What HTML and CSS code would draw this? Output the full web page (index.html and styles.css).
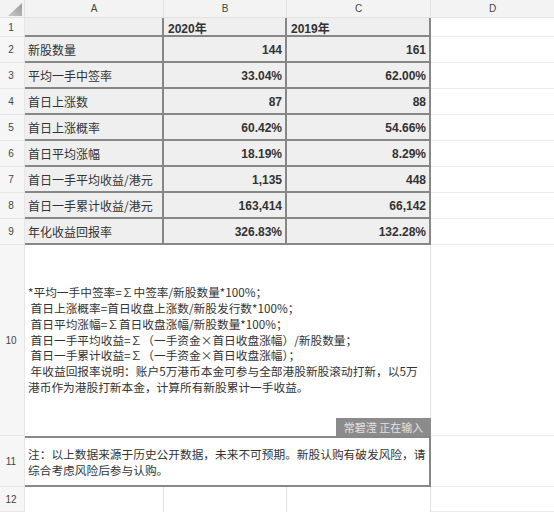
FILE: index.html
```html
<!DOCTYPE html>
<html lang="zh">
<head>
<meta charset="utf-8">
<link rel="stylesheet" href="styles.css">
</head>
<body>
<div class="sheet">
  <div class="hd corner"><svg width="25" height="18" viewBox="0 0 25 18"><defs><linearGradient id="g" x1="0" y1="1" x2="1" y2="0"><stop offset="0" stop-color="#c9c9c9"/><stop offset="1" stop-color="#9a9a9a"/></linearGradient></defs><polygon points="22,3 22,16 8,16" fill="url(#g)"/></svg></div>
  <div class="hd">A</div>
  <div class="hd">B</div>
  <div class="hd">C</div>
  <div class="hd last">D</div>

  <div class="rn">1</div>
  <div class="t lbl"></div>
  <div class="t lbl yr">2020年</div>
  <div class="t lbl yr">2019年</div>
  <div class="d"></div>

  <div class="rn">2</div>
  <div class="t lbl">新股数量</div>
  <div class="t val">144</div>
  <div class="t val">161</div>
  <div class="d"></div>

  <div class="rn">3</div>
  <div class="t lbl">平均一手中签率</div>
  <div class="t val">33.04%</div>
  <div class="t val">62.00%</div>
  <div class="d"></div>

  <div class="rn">4</div>
  <div class="t lbl">首日上涨数</div>
  <div class="t val">87</div>
  <div class="t val">88</div>
  <div class="d"></div>

  <div class="rn">5</div>
  <div class="t lbl">首日上涨概率</div>
  <div class="t val">60.42%</div>
  <div class="t val">54.66%</div>
  <div class="d"></div>

  <div class="rn">6</div>
  <div class="t lbl">首日平均涨幅</div>
  <div class="t val">18.19%</div>
  <div class="t val">8.29%</div>
  <div class="d"></div>

  <div class="rn">7</div>
  <div class="t lbl">首日一手平均收益/港元</div>
  <div class="t val">1,135</div>
  <div class="t val">448</div>
  <div class="d"></div>

  <div class="rn">8</div>
  <div class="t lbl">首日一手累计收益/港元</div>
  <div class="t val">163,414</div>
  <div class="t val">66,142</div>
  <div class="d"></div>

  <div class="rn">9</div>
  <div class="t lbl">年化收益回报率</div>
  <div class="t val">326.83%</div>
  <div class="t val">132.28%</div>
  <div class="d"></div>

  <div class="rn">10</div>
  <div class="note">
    <div class="ln">*平均一手中签率=∑中签率/新股数量*100%；</div>
    <div class="ln"> 首日上涨概率=首日收盘上涨数/新股发行数*100%；</div>
    <div class="ln"> 首日平均涨幅=∑首日收盘涨幅/新股数量*100%；</div>
    <div class="ln"> 首日一手平均收益=∑（一手资金×首日收盘涨幅）/新股数量；</div>
    <div class="ln"> 首日一手累计收益=∑（一手资金×首日收盘涨幅）；</div>
    <div class="ln"> 年收益回报率说明：账户5万港币本金可参与全部港股新股滚动打新，以5万</div>
    <div class="ln">港币作为港股打新本金，计算所有新股累计一手收益。</div>
    <div class="tag">常碧滢 正在输入</div>
  </div>
  <div class="d"></div>

  <div class="rn">11</div>
  <div class="note2">
    <div class="ln">注：以上数据来源于历史公开数据，未来不可预期。新股认购有破发风险，请</div>
    <div class="ln">综合考虑风险后参与认购。</div>
  </div>
  <div class="d"></div>

  <div class="rn">12</div>
  <div class="e"></div>
  <div class="e"></div>
  <div class="e"></div>
  <div class="d"></div>
</div>
</body>
</html>
```

FILE: styles.css
```css
* { box-sizing: border-box; }
html, body { margin: 0; padding: 0; background: #fff; }
body {
  font-family: "Noto Sans CJK SC", "Liberation Sans", sans-serif;
  color: #333;
}
.sheet {
  display: grid;
  grid-template-columns: 25px 139px 123px 144px 1fr;
  grid-template-rows: 18px 19px repeat(8, 26px) 191px 51px 1fr;
  width: 554px;
  height: 512px;
}
.hd {
  background: #f3f3f3;
  border-right: 1px solid #e2e2e2;
  border-bottom: 1px solid #e2e2e2;
  font-family: "Liberation Sans", sans-serif;
  font-size: 10px;
  color: #444;
  display: flex;
  align-items: center;
  justify-content: center;
}
.hd.last { border-right: 0; }
.corner { display: block; }
.corner svg { display: block; }
.rn {
  background: #f6f6f6;
  border-right: 1px solid #e6e6e6;
  border-bottom: 1px solid #e6e6e6;
  font-family: "Liberation Sans", sans-serif;
  font-size: 10px;
  color: #444;
  display: flex;
  align-items: center;
  justify-content: center;
  padding-right: 2px;
}
.t {
  background: #efefef;
  border-right: 2px solid #878787;
  border-bottom: 2px solid #878787;
  display: flex;
  align-items: center;
  font-size: 12px;
  white-space: nowrap;
}
.lbl { padding-left: 3px; padding-top: 1px; }
.yr { font-family: "Liberation Sans", "Noto Sans CJK SC", sans-serif; font-weight: bold; padding-left: 4px; }
.val {
  justify-content: flex-end;
  padding-right: 3px;
  font-family: "Liberation Sans", sans-serif;
  font-weight: bold;
  padding-top: 1px;
}
.d {
  background: #fff;
  border-bottom: 1px solid #ececec;
}
.note {
  grid-column: span 3;
  position: relative;
  background: #fff;
  border-right: 1px solid #e2e2e2;
  padding-left: 3px;
  display: flex;
  flex-direction: column;
  justify-content: center;
  font-size: 11.7px;
  line-height: 15.8px;
  padding-bottom: 2px;
}
.ln { white-space: pre; }
.tag {
  position: absolute;
  right: -1px;
  bottom: 0;
  width: 95px;
  height: 18px;
  background: #8b8b8b;
  color: #e2e2e2;
  font-size: 11px;
  line-height: 18px;
  display: flex;
  align-items: center;
  justify-content: center;
}
.note2 {
  grid-column: span 3;
  background: #fff;
  border-top: 2px solid #878787;
  border-right: 2px solid #878787;
  border-bottom: 2px solid #878787;
  padding-left: 3px;
  display: flex;
  flex-direction: column;
  justify-content: center;
  font-size: 11.7px;
  line-height: 16px;
}
.e {
  background: #fff;
  border-right: 1px solid #e2e2e2;
}
```
